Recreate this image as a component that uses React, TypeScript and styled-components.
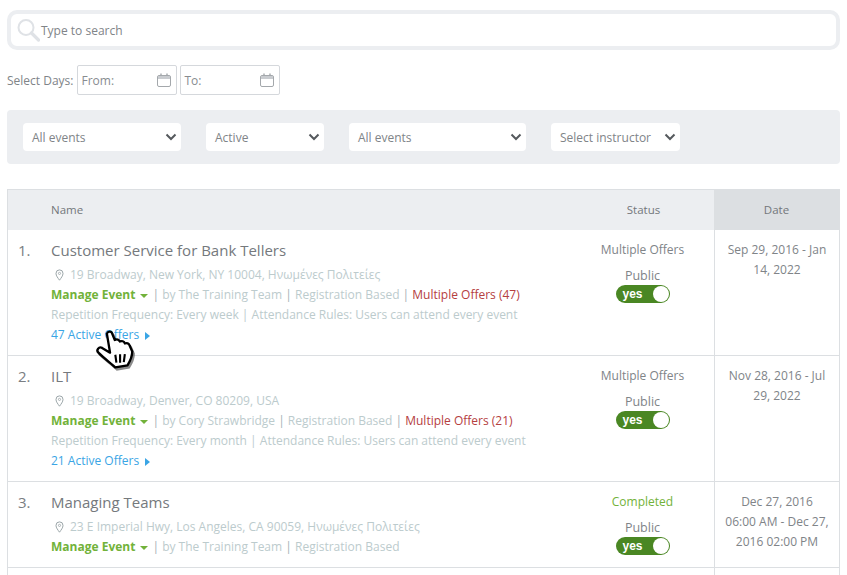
import React from "react";
import styled, { createGlobalStyle } from "styled-components";

const GlobalStyle = createGlobalStyle`
  html, body {
    margin: 0;
    padding: 0;
    background: #fff;
    font-family: "Open Sans", "Liberation Sans", sans-serif;
    font-size: 12px;
    color: #7a7e82;
    overflow: hidden;
  }
`;

const Page = styled.div`
  position: relative;
  width: 847px;
  height: 575px;
  overflow: hidden;
  padding: 10px 7px 0;
  box-sizing: border-box;
`;

const SearchBox = styled.div`
  height: 40px;
  box-sizing: border-box;
  border: 4px solid #eceef1;
  border-radius: 10px;
  display: flex;
  align-items: center;
  gap: 1px;
  padding-left: 5px;
  font-size: 12px;
  color: #808488;
`;

const DateRow = styled.div`
  display: flex;
  align-items: center;
  gap: 3px;
  margin-top: 15px;
  height: 30px;
  font-size: 12px;
`;

const DateLabel = styled.span`
  color: #808488;
`;

const DateField = styled.div`
  width: 100px;
  height: 30px;
  box-sizing: border-box;
  border: 1px solid #d5d8dc;
  border-radius: 2px;
  display: flex;
  align-items: center;
  justify-content: space-between;
  padding: 0 4px 0 4px;
  color: #888c90;
`;

const FilterPanel = styled.div`
  margin-top: 15px;
  height: 54px;
  box-sizing: border-box;
  background: #eceef1;
  border-radius: 4px;
  display: flex;
  align-items: center;
  gap: 25px;
  padding: 0 16px 0;
`;

const SelectBox = styled.div<{ $width: number }>`
  width: ${(p) => p.$width}px;
  height: 28px;
  box-sizing: border-box;
  background: #fff;
  border-radius: 4px;
  display: flex;
  align-items: center;
  justify-content: space-between;
  padding: 0 4px 0 9px;
  color: #808488;
  font-size: 12px;
`;

const Table = styled.div`
  margin-top: 25px;
  border: 1px solid #dcdfe2;
  border-bottom: none;
`;

const HeaderRow = styled.div`
  display: grid;
  grid-template-columns: 43px 1fr 141px 125px;
  height: 40px;
  background: #eceef1;
  align-items: stretch;
  font-size: 11.5px;
  color: #73777b;
`;

const HeadCell = styled.div<{ $center?: boolean; $sorted?: boolean }>`
  display: flex;
  align-items: center;
  justify-content: ${(p) => (p.$center ? "center" : "flex-start")};
  background: ${(p) => (p.$sorted ? "#dcdfe2" : "transparent")};
  padding-bottom: 1px;
`;

const Row = styled.div<{ $height: number }>`
  display: grid;
  grid-template-columns: 43px 1fr 141px 125px;
  height: ${(p) => p.$height}px;
  box-sizing: border-box;
  border-bottom: 1px solid #dcdfe2;
`;

const Index = styled.div`
  padding: 9px 0 0 10px;
  font-size: 15px;
  line-height: 22px;
  color: #7a7e82;
`;

const NameCell = styled.div`
  padding-top: 9px;
  min-width: 0;
`;

const Title = styled.div`
  font-size: 15px;
  line-height: 22px;
  color: #75797d;
  margin-bottom: 4px;
`;

const Line = styled.div`
  font-size: 12px;
  line-height: 20px;
  color: #bccbcd;
  white-space: nowrap;
`;

const AddressLine = styled(Line)`
  display: flex;
  align-items: center;
  gap: 6px;
  padding-left: 4px;
`;

const Manage = styled.span`
  color: #72b23a;
  font-weight: 700;
`;

const Caret = styled.span<{ $dir: "down" | "right"; $color: string }>`
  display: inline-block;
  width: 0;
  height: 0;
  vertical-align: middle;
  ${(p) =>
    p.$dir === "down"
      ? `border-left: 4px solid transparent; border-right: 4px solid transparent; border-top: 4px solid ${p.$color}; margin: 0 4px 0 5px;`
      : `border-top: 4px solid transparent; border-bottom: 4px solid transparent; border-left: 5px solid ${p.$color}; margin-left: 6px;`}
`;

const Red = styled.span`
  color: #b5403f;
`;

const Divider = styled.span`
  color: #a3b0b3;
`;

const OffersLink = styled(Line)`
  color: #3aa5e5;
`;

const StatusCell = styled.div`
  display: flex;
  flex-direction: column;
  align-items: center;
  padding: 10px 2px 0 0;
`;

const StatusText = styled.div<{ $done?: boolean }>`
  font-size: 12px;
  line-height: 20px;
  color: ${(p) => (p.$done ? "#72b23a" : "#808488")};
`;

const PublicText = styled.div`
  font-size: 12.5px;
  line-height: 18px;
  margin-top: 7px;
  color: #808488;
`;

const Toggle = styled.div`
  width: 54px;
  height: 18px;
  box-sizing: border-box;
  border-radius: 9px;
  background: #4a8723;
  display: flex;
  align-items: center;
  justify-content: space-between;
  padding: 0 1px 0 7px;
  color: #fff;
  font-family: "Liberation Sans", Arial, sans-serif;
  font-weight: 700;
  font-size: 12px;
`;

const Knob = styled.span`
  width: 16px;
  height: 16px;
  border-radius: 50%;
  background: #fff;
`;

const DateCell = styled.div`
  border-left: 1px solid #dcdfe2;
  padding: 10px 10px 0;
  text-align: center;
  font-size: 12px;
  line-height: 20px;
  color: #808488;
`;

const CursorOverlay = styled.svg`
  position: absolute;
  left: 91px;
  top: 325px;
`;

const SearchIcon = () => (
  <svg width="24" height="24" viewBox="0 0 24 24" fill="none">
    <circle cx="10" cy="9.5" r="7.5" stroke="#dfe2e6" strokeWidth="2" />
    <path d="M15.5 15l7 7" stroke="#dfe2e6" strokeWidth="3.2" strokeLinecap="round" />
  </svg>
);

const CalendarIcon = () => (
  <svg width="15" height="15" viewBox="0 0 15 15" fill="none">
    <rect x="0.5" y="2.5" width="13" height="11" rx="1.5" stroke="#a4a8ac" />
    <rect x="1" y="3" width="12" height="3" fill="#c9ccd0" />
    <path d="M4 0.5v2M10 0.5v2" stroke="#a4a8ac" strokeWidth="1.4" />
  </svg>
);

const Chevron = () => (
  <svg width="12" height="8" viewBox="0 0 12 8" fill="none">
    <path d="M1.5 1.5L6 6l4.5-4.5" stroke="#55595d" strokeWidth="2" />
  </svg>
);

const PinIcon = () => (
  <svg width="9" height="12" viewBox="0 0 9 12" fill="none">
    <path
      d="M4.5 11.2C2.8 8.8 1 6.8 1 4.4a3.5 3.5 0 0 1 7 0c0 2.4-1.8 4.4-3.5 6.8z"
      stroke="#9aa5a8"
    />
    <circle cx="4.5" cy="4.4" r="1.1" stroke="#9aa5a8" strokeWidth="0.8" />
  </svg>
);

const handPath =
  "M16 9c1-2.500 4.500-2.500 5 0l2.500 6c2-1 4-.5 4.800 1.500 1.800-1 4-.3 4.700 1.800 1.800-.8 4 0 4.500 2L40 26c0 5-2 9-4.500 13L24 41C20 37 14 33 8 27c-2.500-2.500.5-6 3.500-4.500L19 27z";

const HandCursor = () => (
  <CursorOverlay width="55" height="50" viewBox="1 1 52 47">
    <path d={handPath} transform="translate(1.500 2)" fill="#000" stroke="#000" strokeWidth="2" opacity="0.45" />
    <path d={handPath} fill="#fff" stroke="#000" strokeWidth="2.200" strokeLinejoin="round" />
    <path d="M24 29l1 7.500M28.500 28.500v8M33 28.500l-1 7.500" stroke="#000" strokeWidth="2" />
  </CursorOverlay>
);

interface EventRow {
  num: string;
  title?: string;
  address?: string;
  by?: string;
  offers?: number;
  repetition?: string;
  status?: string;
  done?: boolean;
  date?: string;
  height: number;
}

const rows: EventRow[] = [
  {
    num: "1.",
    title: "Customer Service for Bank Tellers",
    address: "19 Broadway, New York, NY 10004, Ηνωμένες Πολιτείες",
    by: "The Training Team",
    offers: 47,
    repetition: "Every week",
    status: "Multiple Offers",
    date: "Sep 29, 2016 - Jan 14, 2022",
    height: 126,
  },
  {
    num: "2.",
    title: "ILT",
    address: "19 Broadway, Denver, CO 80209, USA",
    by: "Cory Strawbridge",
    offers: 21,
    repetition: "Every month",
    status: "Multiple Offers",
    date: "Nov 28, 2016 - Jul 29, 2022",
    height: 126,
  },
  {
    num: "3.",
    title: "Managing Teams",
    address: "23 E Imperial Hwy, Los Angeles, CA 90059, Ηνωμένες Πολιτείες",
    by: "The Training Team",
    status: "Completed",
    done: true,
    date: "Dec 27, 2016 06:00 AM - Dec 27, 2016 02:00 PM",
    height: 86,
  },
];

export default function App() {
  return (
    <Page>
      <GlobalStyle />
      <SearchBox>
        <SearchIcon />
        Type to search
      </SearchBox>
      <DateRow>
        <DateLabel>Select Days:</DateLabel>
        <DateField>
          From:
          <CalendarIcon />
        </DateField>
        <DateField>
          To:
          <CalendarIcon />
        </DateField>
      </DateRow>
      <FilterPanel>
        <SelectBox $width={158}>
          All events
          <Chevron />
        </SelectBox>
        <SelectBox $width={118}>
          Active
          <Chevron />
        </SelectBox>
        <SelectBox $width={177}>
          All events
          <Chevron />
        </SelectBox>
        <SelectBox $width={129}>
          Select instructor
          <Chevron />
        </SelectBox>
      </FilterPanel>
      <Table>
        <HeaderRow>
          <HeadCell />
          <HeadCell>Name</HeadCell>
          <HeadCell $center>Status</HeadCell>
          <HeadCell $center $sorted>
            Date
          </HeadCell>
        </HeaderRow>
        {rows.map((row) => (
          <Row key={row.num} $height={row.height}>
            <Index>{row.num}</Index>
            <NameCell>
              <Title>{row.title}</Title>
              <AddressLine>
                <PinIcon />
                {row.address}
              </AddressLine>
              <Line>
                <Manage>Manage Event</Manage>
                <Caret $dir="down" $color="#72b23a" />
                <Divider>|</Divider> by {row.by} <Divider>|</Divider> Registration Based
                {row.offers !== undefined && (
                  <>
                    {" "}
                    <Divider>|</Divider> <Red>Multiple Offers ({row.offers})</Red>
                  </>
                )}
              </Line>
              {row.repetition && (
                <Line>
                  Repetition Frequency: {row.repetition} | Attendance Rules: Users can attend every
                  event
                </Line>
              )}
              {row.offers !== undefined && (
                <OffersLink>
                  {row.offers} Active Offers
                  <Caret $dir="right" $color="#3aa5e5" />
                </OffersLink>
              )}
            </NameCell>
            <StatusCell>
              <StatusText $done={row.done}>{row.status}</StatusText>
              <PublicText>Public</PublicText>
              <Toggle>
                yes
                <Knob />
              </Toggle>
            </StatusCell>
            <DateCell>{row.date}</DateCell>
          </Row>
        ))}
        <Row $height={20}>
          <Index />
          <NameCell />
          <StatusCell />
          <DateCell />
        </Row>
      </Table>
      <HandCursor />
    </Page>
  );
}
